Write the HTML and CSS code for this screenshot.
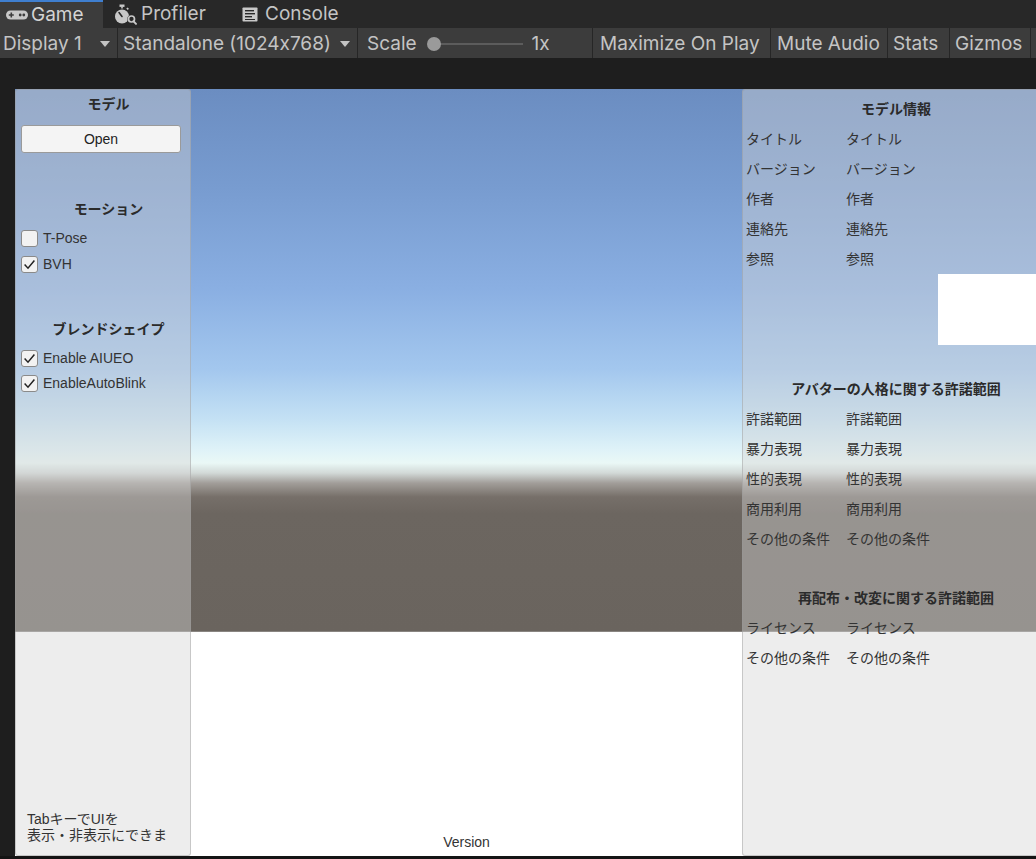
FILE: index.html
```html
<!DOCTYPE html>
<html lang="ja">
<head>
<meta charset="utf-8">
<title>Game</title>
<link rel="stylesheet" href="styles.css">
</head>
<body>
<div class="tabs">
  <div class="tab tab-game active">
    <svg class="ico" width="22" height="11" viewBox="0 0 22 11"><path d="M4.5 0.5H17.5A4.5 4.5 0 0 1 17.5 9.5H4.5A4.5 4.5 0 0 1 4.5 0.5Z" fill="#c8c8c8"/><path d="M2.8 5h5M5.3 2.5v5" stroke="#3c3c3c" stroke-width="1.6"/><circle cx="14.2" cy="5" r="1.4" fill="#3c3c3c"/><circle cx="17.8" cy="5" r="1.4" fill="#3c3c3c"/></svg>
    <span>Game</span>
  </div>
  <div class="tab tab-prof">
    <svg class="ico" width="22" height="21" viewBox="0 0 22 21"><rect x="4.5" y="0.5" width="5" height="2.4" fill="#c8c8c8"/><rect x="6.2" y="2.5" width="1.6" height="2" fill="#c8c8c8"/><path d="M11.3 4.6l1.2-1.2 1.4 1.4-1.2 1.2z" fill="#c8c8c8"/><circle cx="7" cy="12.5" r="7" fill="#c8c8c8"/><path d="M7 12.5L4 8.6" stroke="#282828" stroke-width="1.6" stroke-linecap="round"/><circle cx="16.5" cy="15" r="4.2" fill="#282828"/><circle cx="16.5" cy="15" r="3" fill="none" stroke="#c8c8c8" stroke-width="1.7"/><path d="M18.6 17.3l2.4 2.6" stroke="#c8c8c8" stroke-width="1.9" stroke-linecap="round"/></svg>
    <span>Profiler</span>
  </div>
  <div class="tab tab-cons">
    <svg class="ico" width="16" height="15" viewBox="0 0 16 15"><rect x="0.5" y="0.5" width="15" height="14" rx="0.8" fill="#c8c8c8"/><rect x="3" y="3" width="9" height="1.4" fill="#282828"/><rect x="3" y="6" width="10" height="1.4" fill="#282828"/><rect x="3" y="9" width="7" height="1.4" fill="#282828"/><rect x="3" y="12" width="10" height="1" fill="#282828"/></svg>
    <span>Console</span>
  </div>
  <div class="tab-fill"></div>
</div>
<div class="toolbar">
  <div class="tb tb-display"><span>Display 1</span><i class="tri"></i></div>
  <div class="tb tb-res"><span>Standalone (1024x768)</span><i class="tri"></i></div>
  <div class="tb tb-scale"><span>Scale</span><div class="slider"><div class="knob"></div></div><span class="sv">1x</span></div>
  <div class="tb tb-max"><span>Maximize On Play</span></div>
  <div class="tb tb-mute"><span>Mute Audio</span></div>
  <div class="tb tb-stats"><span>Stats</span></div>
  <div class="tb tb-giz"><span>Gizmos</span></div>
</div>
<div class="view">
  <div class="game">
    <div class="panel left">
      <div class="hd">モデル</div>
      <div class="btn">Open</div>
      <div class="hd hd-motion">モーション</div>
      <div class="chk first"><span class="box"></span><span>T-Pose</span></div>
      <div class="chk"><span class="box"><svg width="17" height="17" viewBox="0 0 17 17"><path d="M3.6 8.6L7 12.2L13.4 4.6" fill="none" stroke="#222" stroke-width="1.5"/></svg></span><span>BVH</span></div>
      <div class="hd hd-blend">ブレンドシェイプ</div>
      <div class="chk first"><span class="box"><svg width="17" height="17" viewBox="0 0 17 17"><path d="M3.6 8.6L7 12.2L13.4 4.6" fill="none" stroke="#222" stroke-width="1.5"/></svg></span><span>Enable AIUEO</span></div>
      <div class="chk short"><span class="box"><svg width="17" height="17" viewBox="0 0 17 17"><path d="M3.6 8.6L7 12.2L13.4 4.6" fill="none" stroke="#222" stroke-width="1.5"/></svg></span><span>EnableAutoBlink</span></div>
      <div class="hint">TabキーでUIを<br>表示・非表示にできま</div>
    </div>
    <div class="center">
      <div class="version">Version</div>
    </div>
    <div class="panel right">
      <div class="rh">モデル情報</div>
      <div class="rows">
        <span>タイトル</span><span>タイトル</span>
        <span>バージョン</span><span>バージョン</span>
        <span>作者</span><span>作者</span>
        <span>連絡先</span><span>連絡先</span>
        <span>参照</span><span>参照</span>
      </div>
      <div class="thumb"></div>
      <div class="rh rh2">アバターの人格に関する許諾範囲</div>
      <div class="rows">
        <span>許諾範囲</span><span>許諾範囲</span>
        <span>暴力表現</span><span>暴力表現</span>
        <span>性的表現</span><span>性的表現</span>
        <span>商用利用</span><span>商用利用</span>
        <span>その他の条件</span><span>その他の条件</span>
      </div>
      <div class="rh rh3">再配布・改変に関する許諾範囲</div>
      <div class="rows">
        <span>ライセンス</span><span>ライセンス</span>
        <span>その他の条件</span><span>その他の条件</span>
      </div>
    </div>
  </div>
</div>
<div class="bottom"></div>
</body>
</html>
```

FILE: styles.css
```css
* { box-sizing: border-box; }
html, body { margin: 0; padding: 0; }
body {
  width: 1036px;
  height: 859px;
  overflow: hidden;
  background: #1e1e1e;
  font-family: Inter, "Noto Sans", sans-serif;
  font-feature-settings: "calt" 0;
}

/* ---------- tabs ---------- */
.tabs {
  display: flex;
  height: 28px;
  background: #282828;
}
.tab {
  display: flex;
  align-items: center;
  height: 28px;
  color: #c4c4c4;
  font-size: 19px;
  line-height: 26px;
  white-space: nowrap;
}
.tab.active {
  background: #3c3c3c;
  border-top: 2px solid #3f7fd0;
  color: #d4d4d4;
}
.tab-game { width: 103px; padding-left: 6px; gap: 3px; }
.tab-prof { width: 127px; padding-left: 12px; gap: 4px; }
.tab-cons { padding-left: 12px; gap: 7px; }
.tab-fill { flex: 1; }

/* ---------- toolbar ---------- */
.toolbar {
  display: flex;
  height: 30px;
  background: #3c3c3c;
  color: #c4c4c4;
  font-size: 19px;
  white-space: nowrap;
}
.tb {
  display: flex;
  align-items: center;
  height: 30px;
  padding-top: 1px;
  border-right: 1px solid #262626;
  flex: none;
}
.tb-display { width: 118px; padding-left: 3px; }
.tb-res { width: 240px; padding-left: 5px; }
.tb-scale { width: 235px; padding-left: 9px; }
.tb-max { width: 178px; padding-left: 7px; }
.tb-mute { width: 117px; padding-left: 6px; }
.tb-stats { width: 62px; padding-left: 5px; }
.tb-giz { width: 81px; padding-left: 5px; }
.tri {
  display: block;
  width: 0;
  height: 0;
  border-left: 5.5px solid transparent;
  border-right: 5.5px solid transparent;
  border-top: 6px solid #c4c4c4;
  margin-left: auto;
  margin-right: 7px;
}
.slider {
  position: relative;
  width: 96px;
  height: 14px;
  margin-left: 10px;
}
.slider::before {
  content: "";
  position: absolute;
  left: 7px;
  right: 0;
  top: 6px;
  height: 2px;
  background: #5c5c5c;
}
.knob {
  position: absolute;
  left: 0;
  top: 0;
  width: 14px;
  height: 14px;
  border-radius: 50%;
  background: #9a9a9a;
}
.sv { margin-left: 9px; }

/* ---------- game view ---------- */
.view {
  height: 798px;
  padding-top: 31px;
  padding-left: 15px;
}
.game {
  width: 1035px;
  height: 767px;
  display: grid;
  grid-template-columns: 176px 551px 308px;
  background:
    linear-gradient(to bottom,
      #6b8dc1 0px,
      #789cd0 100px,
      #8aafe2 200px,
      #a3c7ee 280px,
      #c4e1f4 330px,
      #e0f3f8 362px,
      #eaf8f6 374px,
      #d2d9d7 384px,
      #a29e9a 394px,
      #766f69 408px,
      #6c6660 425px,
      #6a645e 542px,
      #a8a6a4 543px) 0 0 / 100% 543px no-repeat,
    #ffffff;
  font-family: "Liberation Sans", Arial, "Noto Sans CJK JP", sans-serif;
  font-size: 14px;
  color: #333;
}
.panel {
  background: rgba(212, 212, 212, 0.42);
  border: 1px solid rgba(150, 150, 150, 0.45);
  border-radius: 3px;
  height: 767px;
  display: flex;
  flex-direction: column;
}
.left { padding-top: 4px; }
.hd {
  text-align: center;
  font-weight: bold;
  line-height: 20px;
  height: 20px;
  color: #2b2b2b;
  padding-left: 11px;
}
.btn {
  margin: 11px 9px 0 5px;
  height: 28px;
  line-height: 26px;
  text-align: center;
  background: #f4f4f4;
  border: 1px solid #9a9a9a;
  border-radius: 3px;
  color: #222;
}
.hd-motion { margin-top: 46px; }
.hd-blend { margin-top: 42px; }
.chk {
  display: flex;
  align-items: center;
  gap: 5px;
  height: 26px;
  padding-left: 5px;
  color: #333;
}
.chk.first { margin-top: 6px; }
.chk.short { height: 24px; }
.box {
  width: 17px;
  height: 17px;
  flex: none;
  background: #f2f2f2;
  border: 1px solid #8a8a8a;
  border-radius: 3px;
  position: relative;
}
.box svg { position: absolute; left: -1px; top: -1px; }
.hint {
  margin-top: auto;
  padding: 0 0 12px 11px;
  line-height: 16px;
  color: #333;
}
.center {
  display: flex;
  flex-direction: column;
  justify-content: flex-end;
  align-items: center;
}
.version {
  line-height: 16px;
  padding-bottom: 6px;
  color: #333;
}
.right { padding-top: 4px; }
.rh {
  text-align: center;
  font-weight: bold;
  line-height: 30px;
  height: 30px;
  color: #2b2b2b;
}
.rh2 { margin-top: 29px; }
.rh3 { margin-top: 29px; }
.rows {
  display: grid;
  grid-template-columns: 100px auto;
  grid-auto-rows: 30px;
  align-items: center;
  padding-left: 3px;
  white-space: nowrap;
}
.rows span { position: relative; top: -1px; }
.thumb {
  height: 71px;
  margin-left: 195px;
  background: #ffffff;
}
.bottom {
  height: 3px;
  background: #141414;
}
```
